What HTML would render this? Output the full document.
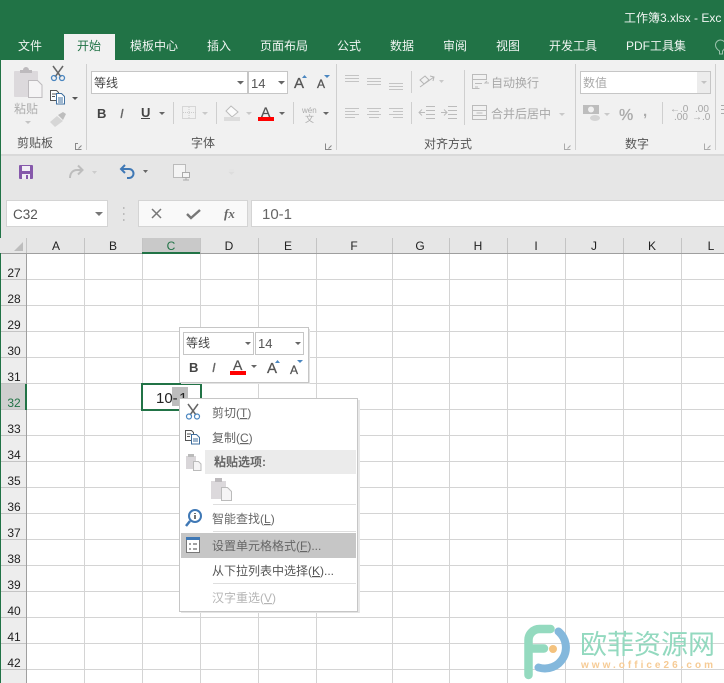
<!DOCTYPE html>
<html><head><meta charset="utf-8"><style>
html,body{margin:0;padding:0;background:#fff}
svg{display:block;position:absolute;left:0;top:0}
text{font-family:"Liberation Sans","Noto Sans CJK SC",sans-serif}
text.s{font-family:"Liberation Serif",serif}
</style></head><body style="width:724px;height:683px;overflow:hidden;position:relative">
<svg width="724" height="683" viewBox="0 0 724 683" xmlns="http://www.w3.org/2000/svg">
<rect width="724" height="683" fill="#fff"/>
<rect width="724" height="60" fill="#217346"/>
<rect x="64" y="34" width="51" height="26" fill="#f1f1f1"/>
<g font-size="12" fill="#f0f5f2">
<text x="18" y="50">文件</text>
<text x="77" y="50" fill="#217346">开始</text>
<text x="130" y="50">模板中心</text>
<text x="207" y="50">插入</text>
<text x="260" y="50">页面布局</text>
<text x="337" y="50">公式</text>
<text x="390" y="50">数据</text>
<text x="443" y="50">审阅</text>
<text x="496" y="50">视图</text>
<text x="549" y="50">开发工具</text>
<text x="626" y="50">PDF工具集</text>
<text x="624" y="22">工作簿3.xlsx - Exc</text>
</g>
<path d="M719.500 54v-3c-3-2-4-4-4-6a5 5 0 0 1 10 0c0 2-1 4-3 6v3z" fill="none" stroke="#9cc2ad" stroke-width="1"/>
<!-- ribbon -->
<rect y="60" width="724" height="94" fill="#f1f1f1"/>
<rect y="154" width="724" height="2" fill="#d9d9d9"/>
<rect y="156" width="724" height="82" fill="#e6e6e6"/>
<rect x="0" y="0" width="1" height="683" fill="#217346"/>
<g fill="#cfcfcf">
<rect x="86" y="64" width="1" height="86"/><rect x="336" y="64" width="1" height="86"/>
<rect x="575" y="64" width="1" height="86"/><rect x="715" y="64" width="1" height="86"/>
<rect x="173" y="102" width="1" height="22"/><rect x="216" y="102" width="1" height="22"/><rect x="293" y="102" width="1" height="22"/>
<rect x="411" y="71" width="1" height="22"/><rect x="411" y="102" width="1" height="22"/><rect x="464" y="70" width="1" height="55"/>
<rect x="662" y="102" width="1" height="22"/>
</g>
<!-- clipboard -->
<rect x="14" y="71" width="24" height="26" rx="1" fill="#dcd9dc"/>
<path d="M20 73v-3h3a3 3 0 0 1 6 0h3v3z" fill="#bdbabd"/>
<path d="M28.500 80.500h9l4.500 4.500v12.500h-13.500z" fill="#f5f4f5" stroke="#bdbabd"/>
<text x="14" y="113" font-size="12" fill="#adadad">粘贴</text>
<path d="M25 121h6l-3 3z" fill="#c4c4c4"/>
<path d="M53 66l8 11M63 66l-8 11" fill="none" stroke="#666" stroke-width="1.500"/>
<g fill="none" stroke="#4a86c0" stroke-width="1.300"><circle cx="54" cy="78" r="2.500"/><circle cx="62" cy="78" r="2.500"/></g>
<path d="M50.500 90.500h6l2 2v8h-8z" fill="#fff" stroke="#555"/><path d="M52 94h4M52 96.500h3" stroke="#555"/>
<path d="M56.500 93.500h5l3 3v7.500h-8z" fill="#fff" stroke="#3f6f9f"/><path d="M58 98h5M58 100h5M58 102h5" stroke="#3f6f9f"/>
<path d="M72 97h6l-3 3z" fill="#555"/>
<path d="M50 122l7-6 6 5-8 6z" fill="#d6d6d6"/><path d="M58 115l5-3 3 2-3 6z" fill="#bdbdbd"/>
<text x="17" y="147" font-size="12" fill="#555">剪贴板</text>
<path d="M75.500 143.500v6h6m0-4l-3 3" fill="none" stroke="#888"/><path d="M75 143h3v1h-2v2h-1z" fill="#888"/>
<path d="M325.500 143.500v6h6m0-4l-3 3" fill="none" stroke="#888"/>
<!-- font controls -->
<rect x="91.500" y="71.500" width="156" height="22" fill="#fff" stroke="#c6c6c6"/>
<rect x="248.500" y="71.500" width="39" height="22" fill="#fff" stroke="#c6c6c6"/>
<text x="94" y="87" font-size="12" fill="#444">等线</text>
<text x="251" y="88" font-size="13" fill="#555">14</text>
<path d="M237 81h7l-3.500 3.500zM278 81h7l-3.500 3.500z" fill="#666"/>
<text x="294" y="88" font-size="15" fill="#555" stroke="#555" stroke-width=".3">A</text><path d="M302 78l2.500-3 2.500 3z" fill="#4a86c0"/>
<text x="317" y="88" font-size="12" fill="#555" stroke="#555" stroke-width=".3">A</text><path d="M324 75h6l-3 3z" fill="#4a86c0"/>
<text x="97" y="118" font-size="13" font-weight="bold" fill="#444">B</text>
<text x="120" y="118" font-size="13" font-style="italic" fill="#666" stroke="#666" stroke-width=".3">I</text>
<text x="141" y="117" font-size="13" font-weight="bold" fill="#444">U</text>
<rect x="141" y="118" width="9" height="1" fill="#444"/>
<path d="M159 112h6l-3 3z" fill="#666"/>
<rect x="182.500" y="106.500" width="13" height="12" fill="none" stroke="#bbb" stroke-dasharray="1 1"/><path d="M189 107v12M183 112.500h13" stroke="#ccc" stroke-dasharray="1 1"/>
<path d="M202 112h6l-3 3z" fill="#c9c9c9"/>
<path d="M231 106l7 6-6 5-6-6z" fill="#fbfbfb" stroke="#bbb"/><rect x="224" y="117" width="16" height="4" fill="#dcdcdc"/>
<path d="M246 112h6l-3 3z" fill="#c9c9c9"/>
<text x="261" y="117" font-size="14" fill="#555" stroke="#555" stroke-width=".3">A</text>
<rect x="258" y="117" width="16" height="4" fill="#f00"/>
<path d="M279 112h6l-3 3z" fill="#666"/>
<text x="302" y="113" font-size="8" fill="#aaa">wén</text><text x="305" y="122" font-size="9" fill="#aaa">文</text>
<path d="M323 112h6l-3 3z" fill="#666"/>
<text x="191" y="147" font-size="12" fill="#555">字体</text>
<!-- alignment -->
<g stroke="#c4c4c4" fill="none">
<path d="M345 75.500h14M345 78.500h14M345 81.500h14"/>
<path d="M367 78.500h14M367 81.500h14M367 84.500h14"/>
<path d="M389 83.500h14M389 86.500h14M389 89.500h14"/>
<path d="M345 108.500h14M345 111.500h10M345 114.500h14M345 117.500h10"/>
<path d="M367 108.500h14M369 111.500h10M367 114.500h14M369 117.500h10"/>
<path d="M389 108.500h14M393 111.500h10M389 114.500h14M393 117.500h10"/>
<path d="M420 87l14-10M430 76l4 1-1 4M420 80l5-4 4 4-5 4z" stroke="#b5b5b5"/>
<path d="M426 106.500h9M426 110.500h9M426 114.500h9M426 118.500h9M419 112.500h6M422 109.500l-3 3 3 3" stroke="#bbb"/>
<path d="M448 106.500h9M448 110.500h9M448 114.500h9M448 118.500h9M441 112.500h6M444 109.500l3 3-3 3" stroke="#bbb"/>
<path d="M472.500 74.500h14v5h-14zM472.500 79.500v9h7M475 83.500h7M475 87h3M489 83h-4l2-2" stroke="#bbb"/>
<rect x="472.500" y="105.500" width="14" height="14" stroke="#bbb"/><path d="M472.500 110.500h14M472.500 115.500h14M476.500 113h6" stroke="#bbb"/>
</g>
<path d="M439 80h5l-2.500 3z" fill="#c9c9c9"/>
<path d="M559 113h6l-3 3z" fill="#c9c9c9"/>
<text x="491" y="87" font-size="12" fill="#a8a8a8">自动换行</text>
<text x="491" y="118" font-size="12" fill="#a8a8a8">合并后居中</text>
<text x="424" y="148" font-size="12" fill="#555">对齐方式</text>
<path d="M564.500 143.500v6h6m0-4l-3 3" fill="none" stroke="#aaa"/>
<!-- number -->
<rect x="580.500" y="71.500" width="130" height="22" fill="#fff" stroke="#c6c6c6"/>
<rect x="697" y="72" width="13" height="21" fill="#ececec"/>
<path d="M701 81h6l-3 3z" fill="#c2c2c2"/>
<text x="583" y="87" font-size="12" fill="#a9a9a9">数值</text>
<rect x="583" y="105" width="16" height="9" fill="#bdbdbd"/><circle cx="591" cy="109.500" r="3" fill="#f1f1f1"/><ellipse cx="595" cy="118" rx="5" ry="3" fill="#d4d4d4"/>
<path d="M604 113h6l-3 3z" fill="#c9c9c9"/>
<text x="619" y="120" font-size="16" fill="#aaa" stroke="#aaa" stroke-width=".3">%</text>
<text x="643" y="116" font-size="15" font-weight="bold" fill="#aaa">,</text>
<g font-size="10" fill="#a5a5a5">
<text x="670" y="112">←.0</text><text x="674" y="120">.00</text>
<text x="695" y="112">.00</text><text x="692" y="120">→.0</text>
</g>
<text x="625" y="148" font-size="12" fill="#555">数字</text>
<path d="M704.500 143.500v6h6m0-4l-3 3" fill="none" stroke="#aaa"/>
<rect x="721" y="105" width="3" height="1" fill="#aaa"/><rect x="721" y="109" width="3" height="1" fill="#aaa"/><rect x="721" y="113" width="3" height="1" fill="#aaa"/>
<!-- quick access -->
<rect x="19" y="165" width="14" height="14" rx="1" fill="#8659ab"/><rect x="22" y="166" width="8" height="5" fill="#f1eef5"/><rect x="22" y="174" width="8" height="5" fill="#f1eef5"/><rect x="26" y="175" width="2" height="4" fill="#8659ab"/>
<path d="M70 178c0-5 3-8 7-8h5M78 165.500l4.500 4.500-4.500 4.500" fill="none" stroke="#bdbdbd" stroke-width="2"/>
<path d="M92 171h5l-2.500 3z" fill="#ccc"/>
<path d="M125 165l-4 4 4 4M121 169h8a4.500 4.500 0 0 1 0 9h-2" fill="none" stroke="#3f78b5" stroke-width="2"/>
<path d="M143 170h5l-2.500 3z" fill="#666"/>
<rect x="173.500" y="164.500" width="12" height="13" fill="#f4f4f4" stroke="#bbb"/><rect x="182.500" y="172.500" width="7" height="5" fill="#f4f4f4" stroke="#aaa"/><path d="M186 178v2h-3h6" stroke="#aaa" fill="none"/>
<path d="M229 170h5M229 172h5l-2.500 2.500z" stroke="#ddd" fill="#ddd" stroke-width=".6"/>
<!-- formula bar -->
<rect x="6.500" y="200.500" width="101" height="26" fill="#fff" stroke="#d4d4d4"/>
<text x="13" y="219" font-size="13.500" fill="#555">C32</text>
<path d="M95 212h8l-4 4z" fill="#777"/>
<path d="M123 208h1.500M123 214h1.500M123 220h1.500" stroke="#bbb" stroke-width="2"/>
<rect x="138.500" y="200.500" width="109" height="26" fill="#f9f9f9" stroke="#d4d4d4"/>
<rect x="251.500" y="200.500" width="480" height="26" fill="#fff" stroke="#d4d4d4"/>
<path d="M152 209l9 9M161 209l-9 9" stroke="#777" stroke-width="1.500"/>
<path d="M187 214l4 4 9-8" fill="none" stroke="#777" stroke-width="2.400"/>
<text class="s" x="224" y="218" font-size="13" font-style="italic" font-weight="bold" fill="#666">fx</text>
<text x="262" y="219" font-size="15" fill="#666">10-1</text>
<!-- headers -->
<rect y="238" width="724" height="15" fill="#e6e6e6"/>
<rect x="142" y="238" width="58" height="15" fill="#c9c9c9"/>
<rect x="1" y="253" width="25" height="430" fill="#ededed"/>
<rect x="1" y="384" width="25" height="26" fill="#cfcfcf"/>
<path d="M23 242v9h-9z" fill="#bdbdbd"/>
<!-- grid -->
<g stroke="#d4d4d4" fill="none">
<path d="M27 279.500H724M27 305.500H724M27 331.500H724M27 357.500H724M27 383.500H724M27 409.500H724M27 435.500H724M27 461.500H724M27 487.500H724M27 513.500H724M27 539.500H724M27 565.500H724M27 591.500H724M27 617.500H724M27 643.500H724M27 669.500H724"/>
<path d="M84.500 253V683M142.500 253V683M200.500 253V683M258.500 253V683M316.500 253V683M392.500 253V683M449.500 253V683M507.500 253V683M565.500 253V683M623.500 253V683M681.500 253V683"/>
</g>
<g stroke="#c4c4c4">
<path d="M1 279.500h25M1 305.500h25M1 331.500h25M1 357.500h25M1 383.500h25M1 409.500h25M1 435.500h25M1 461.500h25M1 487.500h25M1 513.500h25M1 539.500h25M1 565.500h25M1 591.500h25M1 617.500h25M1 643.500h25M1 669.500h25"/>
<path d="M26.500 238v15M84.500 238v15M142.500 238v15M200.500 238v15M258.500 238v15M316.500 238v15M392.500 238v15M449.500 238v15M507.500 238v15M565.500 238v15M623.500 238v15M681.500 238v15"/>
</g>
<rect y="253" x="1" width="723" height="1" fill="#9f9f9f"/>
<rect x="26" y="253" width="1" height="430" fill="#9f9f9f"/>
<rect x="142" y="252" width="58" height="2" fill="#217346"/>
<rect x="25" y="384" width="2" height="26" fill="#217346"/>
<g font-size="12" fill="#222" text-anchor="middle">
<text x="56" y="250">A</text><text x="113" y="250">B</text><text x="171" y="250" fill="#217346">C</text><text x="229" y="250">D</text><text x="288" y="250">E</text><text x="354" y="250">F</text><text x="420" y="250">G</text><text x="478" y="250">H</text><text x="536" y="250">I</text><text x="594" y="250">J</text><text x="652" y="250">K</text><text x="711" y="250">L</text>
</g>
<g font-size="12" fill="#222" text-anchor="middle">
<text x="14" y="277">27</text><text x="14" y="303">28</text><text x="14" y="329">29</text><text x="14" y="355">30</text><text x="14" y="381">31</text><text x="14" y="407" fill="#217346">32</text><text x="14" y="433">33</text><text x="14" y="459">34</text><text x="14" y="485">35</text><text x="14" y="511">36</text><text x="14" y="537">37</text><text x="14" y="563">38</text><text x="14" y="589">39</text><text x="14" y="615">40</text><text x="14" y="641">41</text><text x="14" y="667">42</text>
</g>
<!-- selected cell -->
<rect x="142" y="384" width="59" height="26" fill="#fff" stroke="#217346" stroke-width="2"/>
<rect x="172" y="387" width="16" height="19" fill="#bdbdbd"/>
<text x="156" y="403" font-size="15" fill="#222">10-</text><text x="179" y="403" font-size="15" fill="#222">1</text>
<!-- logo -->
<g fill="none" stroke-linecap="round">
<path d="M558.500 631.500a21 21 0 0 1-20 36" stroke="#84b8dc" stroke-width="8"/>
<path d="M528.500 675v-35a11 11 0 0 1 11-11h11M529 648.500h15" stroke="#94dabf" stroke-width="8.500"/>
</g>
<circle cx="553" cy="649" r="4" fill="#f4c27e"/>
<text x="580" y="654" font-size="27" fill="#93d9bf">欧菲资源网</text>
<text x="581" y="668" font-size="10" font-weight="bold" fill="#f6cb95" textLength="132" lengthAdjust="spacing">www.office26.com</text>
<!-- mini toolbar -->
<rect x="179.500" y="327.500" width="129" height="55" fill="#fff" stroke="#c6c6c6"/>
<rect x="309" y="329" width="1" height="55" fill="#e2e2e2"/><rect x="181" y="383" width="129" height="1" fill="#e2e2e2"/>
<rect x="183.500" y="332.500" width="70" height="22" fill="#fff" stroke="#c6c6c6"/>
<rect x="255.500" y="332.500" width="48" height="22" fill="#fff" stroke="#c6c6c6"/>
<text x="186" y="347" font-size="12" fill="#444">等线</text>
<text x="258" y="348" font-size="13" fill="#555">14</text>
<path d="M245 342h6l-3 3zM295 342h6l-3 3z" fill="#666"/>
<text x="189" y="372" font-size="13" font-weight="bold" fill="#444">B</text>
<text x="212" y="372" font-size="13" font-style="italic" fill="#666" stroke="#666" stroke-width=".3">I</text>
<text x="233" y="370" font-size="14" fill="#555" stroke="#555" stroke-width=".3">A</text>
<rect x="230" y="371" width="16" height="4" fill="#f00"/>
<path d="M251 365h6l-3 3z" fill="#666"/>
<text x="267" y="373" font-size="15" fill="#555" stroke="#555" stroke-width=".3">A</text><path d="M275 363l2.500-3 2.500 3z" fill="#4a86c0"/>
<text x="290" y="374" font-size="12" fill="#555" stroke="#555" stroke-width=".3">A</text><path d="M297 360h6l-3 3z" fill="#4a86c0"/>
<!-- context menu -->
<rect x="358" y="400" width="2" height="213" fill="#e8e8e8"/><rect x="181" y="612" width="178" height="1" fill="#e4e4e4"/>
<rect x="179.500" y="398.500" width="178" height="213" fill="#fff" stroke="#c6c6c6"/>
<rect x="205" y="450" width="151" height="24" fill="#ebebeb"/>
<rect x="181" y="533" width="175" height="25" fill="#c6c6c6"/>
<path d="M213 504.500h143M213 531.500h143M213 583.500h143" stroke="#dedede"/>
<g font-size="12" fill="#666">
<text x="212" y="417">剪切(<tspan text-decoration="underline">T</tspan>)</text>
<text x="212" y="442">复制(<tspan text-decoration="underline">C</tspan>)</text>
<text x="214" y="466" font-weight="bold">粘贴选项:</text>
<text x="212" y="523">智能查找(<tspan text-decoration="underline">L</tspan>)</text>
<text x="212" y="550">设置单元格格式(<tspan text-decoration="underline">F</tspan>)...</text>
<text x="212" y="575" fill="#555">从下拉列表中选择(<tspan text-decoration="underline">K</tspan>)...</text>
<text x="212" y="602" fill="#b5b5b5">汉字重选(<tspan text-decoration="underline">V</tspan>)</text>
</g>
<path d="M188 404l8 11M198 404l-8 11" stroke="#666" stroke-width="1.500"/>
<circle cx="189" cy="416.500" r="2.500" fill="none" stroke="#4a86c0" stroke-width="1.200"/><circle cx="197" cy="416.500" r="2.500" fill="none" stroke="#4a86c0" stroke-width="1.200"/>
<path d="M185.500 430.500h6l2 2v8h-8z" fill="#fff" stroke="#555"/><path d="M187 434h4M187 436.500h3" stroke="#555"/>
<path d="M191.500 434.500h5l3 3v6.500h-8z" fill="#fff" stroke="#3f6f9f"/><path d="M193 439h5M193 441h5" stroke="#3f6f9f"/>
<rect x="186" y="456" width="10" height="13" fill="#d9d6d9"/><rect x="188" y="454" width="6" height="3" fill="#bbb"/><path d="M193.500 461.500h5l2.500 2.500v6.500h-7.500z" fill="#f5f4f5" stroke="#bbb"/>
<rect x="211" y="481" width="15" height="18" fill="#dcd9dc"/><rect x="215" y="478" width="7" height="4" fill="#bdbabd"/><path d="M221.500 487.500h6l4 4v9h-10z" fill="#f5f4f5" stroke="#bbb"/>
<circle cx="195" cy="516" r="6" fill="#fff" stroke="#3f78b5" stroke-width="2"/><path d="M190 521l-4 5" stroke="#3f78b5" stroke-width="2.500"/><path d="M195 513v1M195 515v4" stroke="#444" stroke-width="1.500"/>
<rect x="186.500" y="537.500" width="13" height="15" fill="#fff" stroke="#777"/><rect x="186" y="537" width="14" height="3" fill="#3f78b5"/><path d="M189 544h2M193 544h4M189 549h2M193 549h4" stroke="#444"/>
</svg>
</body></html>
